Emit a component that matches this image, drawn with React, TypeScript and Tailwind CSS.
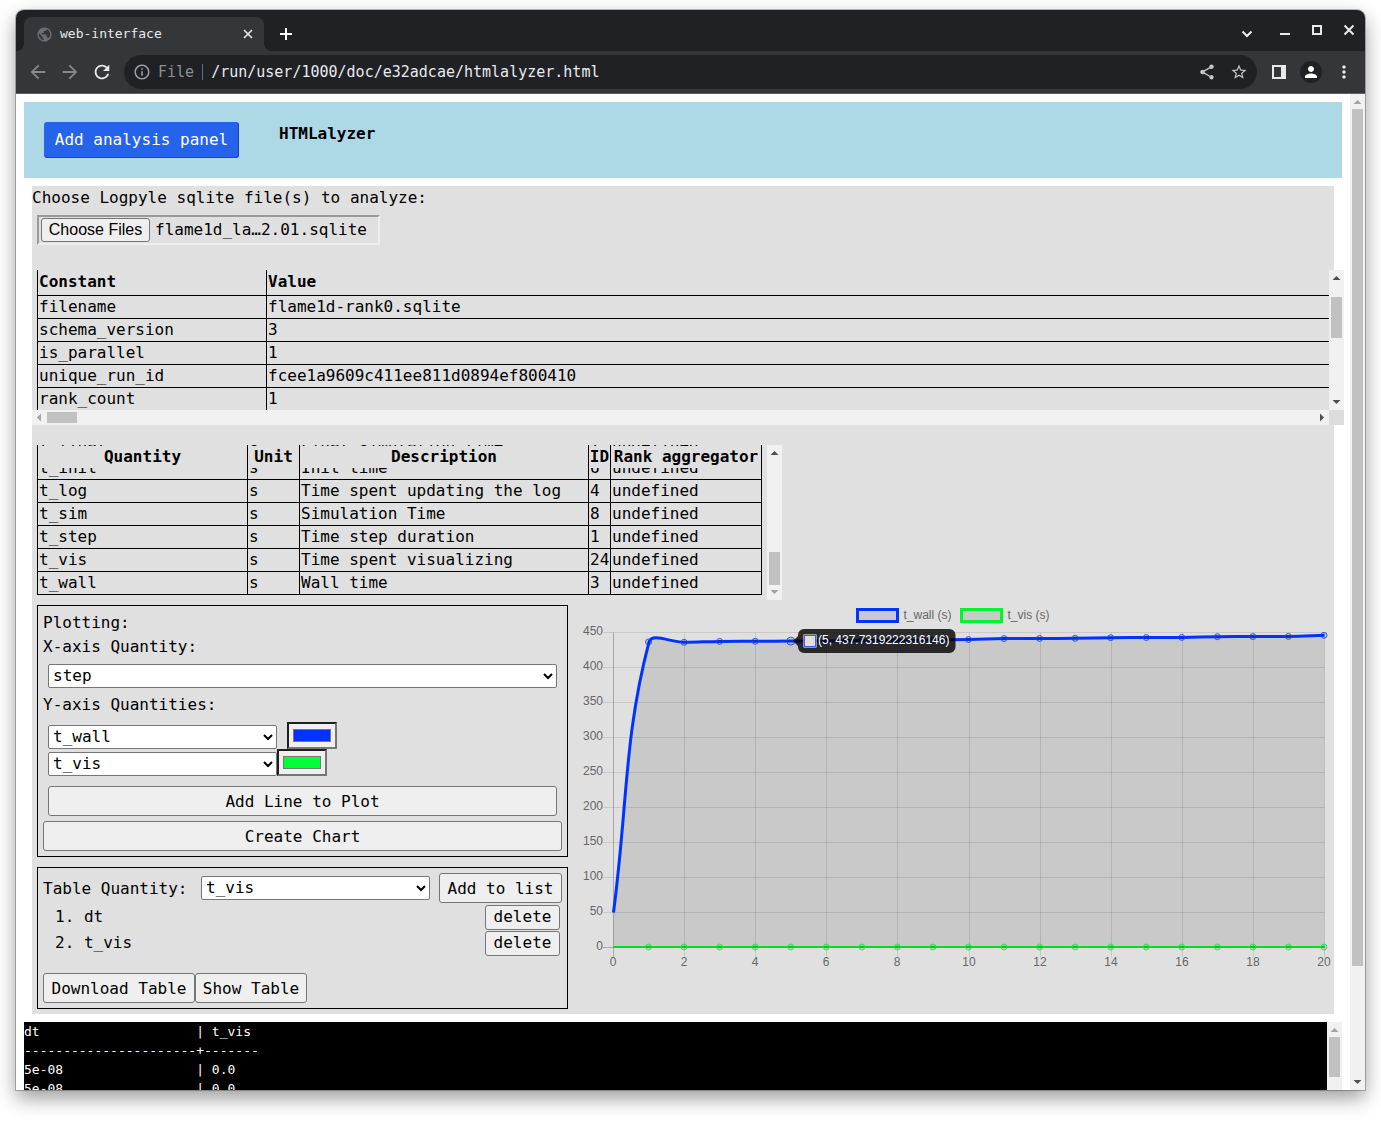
import { useLayoutEffect, useRef, type ReactNode } from "react";
import {
  MdArrowBack,
  MdArrowForward,
  MdInfoOutline,
  MdMoreVert,
  MdPerson,
  MdPublic,
  MdRefresh,
  MdShare,
  MdStarOutline,
} from "react-icons/md";

const constants = [
  ["filename", "flame1d-rank0.sqlite"],
  ["schema_version", "3"],
  ["is_parallel", "1"],
  ["unique_run_id", "fcee1a9609c411ee811d0894ef800410"],
  ["rank_count", "1"],
];

const quantities = [
  ["t_final", "s", "Final simulation time", "7", "undefined"],
  ["t_init", "s", "Init time", "6", "undefined"],
  ["t_log", "s", "Time spent updating the log", "4", "undefined"],
  ["t_sim", "s", "Simulation Time", "8", "undefined"],
  ["t_step", "s", "Time step duration", "1", "undefined"],
  ["t_vis", "s", "Time spent visualizing", "24", "undefined"],
  ["t_wall", "s", "Wall time", "3", "undefined"],
];

/* ---------- scroll bars ---------- */

function Arrow({ dir, dim }: { dir: "up" | "down" | "left" | "right"; dim?: boolean }) {
  const d = {
    up: "M3.500 10 7.500 6 11.500 10z",
    down: "M3.500 5 7.500 9 11.500 5z",
    left: "M9 3.500 5 7.500 9 11.500z",
    right: "M6 3.500 10 7.500 6 11.500z",
  }[dir];
  return (
    <svg className="size-[15px] shrink-0" viewBox="0 0 15 15" aria-hidden="true">
      <path d={d} fill={dim ? "#a3a3a3" : "#505050"} />
    </svg>
  );
}

function VBar({ thumb, upDim, downDim }: { thumb: string; upDim?: boolean; downDim?: boolean }) {
  return (
    <div className="flex w-[15px] shrink-0 flex-col bg-[#f1f1f1]">
      <Arrow dir="up" dim={upDim} />
      <div className="min-h-0 flex-1 px-[2px]">
        <div className={`bg-[#c1c1c1] ${thumb}`} />
      </div>
      <Arrow dir="down" dim={downDim} />
    </div>
  );
}

/* ---------- browser frame ---------- */

function TitleBar() {
  return (
    <div className="flex h-[41px] items-end bg-[#202124] pl-2 text-[#e8eaed]">
      <div className="relative flex h-[34px] w-60 items-center rounded-t-lg bg-[#35363a] pr-2 pl-3">
        <span className="absolute bottom-0 -left-2 size-2 bg-[radial-gradient(circle_at_0_0,#202124_8px,#35363a_8px)]" />
        <span className="absolute -right-2 bottom-0 size-2 bg-[radial-gradient(circle_at_100%_0,#202124_8px,#35363a_8px)]" />
        <MdPublic className="size-[17px] text-[#6b6e72]" />
        <span className="ml-[7px] flex-1 text-[13px]">web-interface</span>
        <button aria-label="Close tab" className="flex size-4 items-center justify-center">
          <svg className="size-3 shrink-0" viewBox="0 0 12 12" fill="none" stroke="currentColor" strokeWidth="1.600">
            <path d="m2 2 8 8M10 2l-8 8" />
          </svg>
        </button>
      </div>
      <button aria-label="New tab" className="ml-3 flex h-[34px] w-5 items-center justify-center text-white">
        <svg className="size-3 shrink-0" viewBox="0 0 12 12" fill="none" stroke="currentColor" strokeWidth="2">
          <path d="M6 0v12M0 6h12" />
        </svg>
      </button>
      <div className="ml-auto flex h-full items-center pb-px">
        <button aria-label="Search tabs" className="mr-[22px] flex size-4 items-center justify-center pt-2">
          <svg className="size-3 shrink-0" viewBox="0 0 12 12" fill="none" stroke="currentColor" strokeWidth="2">
            <path d="M1.500 3.500 6 8l4.500-4.500" />
          </svg>
        </button>
        <button aria-label="Minimize" className="mr-4 flex size-4 items-center justify-center">
          <svg className="size-3 shrink-0" viewBox="0 0 12 12" fill="currentColor">
            <path d="M1 9h10v2H1z" />
          </svg>
        </button>
        <button aria-label="Maximize" className="mr-4 flex size-4 items-center justify-center">
          <svg className="size-3 shrink-0" viewBox="0 0 12 12" fill="none" stroke="currentColor" strokeWidth="2">
            <path d="M2 2h8v8H2z" />
          </svg>
        </button>
        <button aria-label="Close" className="mr-2 flex size-4 items-center justify-center">
          <svg className="size-3 shrink-0" viewBox="0 0 12 12" fill="none" stroke="currentColor" strokeWidth="2">
            <path d="m1.500 1.500 9 9M10.500 1.500l-9 9" />
          </svg>
        </button>
      </div>
    </div>
  );
}

function Toolbar() {
  return (
    <div className="flex h-[43px] items-center border-b border-[#5f6064] bg-[#35363a] px-[11px] text-[#e8eaed]">
      <button aria-label="Back" className="mr-[10px] pb-px text-[#86888c]">
        <MdArrowBack className="size-[22px]" />
      </button>
      <button aria-label="Forward" className="mr-[10px] pb-px text-[#86888c]">
        <MdArrowForward className="size-[22px]" />
      </button>
      <button aria-label="Reload" className="mr-[11px] pb-px">
        <MdRefresh className="size-[22px]" />
      </button>
      <div className="flex h-[34px] flex-1 items-center rounded-full bg-[#202124] px-[9px] text-[15px]">
        <MdInfoOutline className="size-[18px] text-[#9aa0a6]" />
        <span className="ml-[7px] text-[#8b8f94]">File</span>
        <span className="mx-2 h-4 w-px bg-[#6b6e72]" />
        <input
          aria-label="Address"
          className="min-w-0 flex-1 bg-transparent"
          defaultValue="/run/user/1000/doc/e32adcae/htmlalyzer.html"
        />
        <button aria-label="Share" className="mr-[14px] text-[#c4c7c5]">
          <MdShare className="size-[18px]" />
        </button>
        <button aria-label="Bookmark" className="text-[#c4c7c5]">
          <MdStarOutline className="size-[18px]" />
        </button>
      </div>
      <button aria-label="Side panel" className="ml-[14px] pb-px">
        <svg className="size-4" viewBox="0 0 16 16" fill="currentColor">
          <path fillRule="evenodd" d="M1 1h14v14H1zM3 3v10h7V3z" />
        </svg>
      </button>
      <button
        aria-label="Profile"
        className="ml-[13px] flex size-[22px] items-center justify-center rounded-full bg-[#202124] text-white"
      >
        <MdPerson className="size-[18px]" />
      </button>
      <button aria-label="Menu" className="ml-3">
        <MdMoreVert className="size-5" />
      </button>
    </div>
  );
}

/* ---------- form parts ---------- */

function PushButton({ className, children }: { className: string; children: ReactNode }) {
  return (
    <button className={`rounded-[3px] border border-[#767676] bg-[#efefef] text-black ${className}`}>{children}</button>
  );
}

function Choice({ id, label, value, className }: { id: string; label?: string; value: string; className: string }) {
  return (
    <select
      id={id}
      aria-label={label}
      defaultValue={value}
      className={`h-6 rounded-[2px] border border-[#767676] bg-white pb-px text-black ${className}`}
    >
      {["step", "dt", "t_log", "t_sim", "t_step", "t_vis", "t_wall"].map((q) => (
        <option key={q}>{q}</option>
      ))}
    </select>
  );
}

function Swatch({ label, value }: { label: string; value: string }) {
  return (
    <input
      type="color"
      aria-label={label}
      defaultValue={value}
      className="h-[27px] w-[50px] border-2 border-t-[#1f1f1f] border-r-[#767676] border-b-[#767676] border-l-[#1f1f1f] bg-[#efefef] px-[2px] py-px"
    />
  );
}

/* ---------- tables ---------- */

function ConstantsTable() {
  return (
    <div className="mt-[25px] -mr-[10px]">
      <div className="flex h-[140px]">
        <div className="min-w-0 flex-1 overflow-hidden pl-[5px]">
          <table className="w-[150%] table-fixed border-collapse text-left leading-[22px]">
            <thead>
              <tr className="h-[25px]">
                <th className="w-[229px] border border-t-0 border-black px-px py-0">Constant</th>
                <th className="border border-t-0 border-black px-px py-0">Value</th>
              </tr>
            </thead>
            <tbody>
              {constants.map(([k, v]) => (
                <tr key={k}>
                  <td className="border border-black px-px py-0">{k}</td>
                  <td className="border border-black px-px py-0">{v}</td>
                </tr>
              ))}
            </tbody>
          </table>
        </div>
        <VBar thumb="mt-3 h-[41px]" />
      </div>
      <div className="flex h-[15px]">
        <div className="flex flex-1 items-center bg-[#f1f1f1]">
          <Arrow dir="left" dim />
          <div className="h-[11px] w-[30px] bg-[#c1c1c1]" />
          <div className="flex-1" />
          <Arrow dir="right" />
        </div>
        <div className="w-[15px] bg-[#dcdcdc]" />
      </div>
    </div>
  );
}

function QuantitiesTable() {
  const box = useRef<HTMLDivElement>(null);
  useLayoutEffect(() => {
    if (box.current) box.current.scrollTop = box.current.scrollHeight;
  }, []);
  return (
    <div className="mt-5 flex h-[155px] w-[750px] max-w-full">
      <div ref={box} className="min-w-0 flex-1 overflow-hidden px-[5px] pb-[5px]">
        <table className="w-full table-fixed border-collapse leading-[22px]">
          <colgroup>
            <col className="w-[210px]" />
            <col className="w-[52px]" />
            <col className="w-[289px]" />
            <col className="w-[22px]" />
            <col />
          </colgroup>
          <thead>
            <tr>
              {["Quantity", "Unit", "Description", "ID", "Rank aggregator"].map((h) => (
                <th key={h} className="sticky top-0 border border-black bg-[#e0e0e0] bg-clip-padding p-0 whitespace-nowrap">
                  {h}
                </th>
              ))}
            </tr>
          </thead>
          <tbody>
            {quantities.map((row) => (
              <tr key={row[0]}>
                {row.map((cell, i) => (
                  <td key={i} className="border border-black px-px py-0 whitespace-nowrap">
                    {cell}
                  </td>
                ))}
              </tr>
            ))}
          </tbody>
        </table>
      </div>
      <VBar thumb="mt-[92px] h-[33px]" downDim />
    </div>
  );
}

/* ---------- chart ---------- */

type Pt = { x: number; y: number };

const LEFT = 40.5;
const RIGHT = 751.5;
const TOP = 27.5;
const BOTTOM = 342.5;

const place = (i: number, v: number): Pt => ({
  x: LEFT + (i * (RIGHT - LEFT)) / 20,
  y: BOTTOM - (v * (BOTTOM - TOP)) / 450,
});

const wall = [
  50, 436.5, 436, 437.3, 437.5, 437.7, 438, 438.4, 438.8, 439.4, 440, 441.3, 441.5, 441.7, 442.6, 442.8, 443, 444, 444.2,
  444.4, 446,
].map((v, i) => place(i, v));
const vis = wall.map((_, i) => place(i, 0));

/* Cubic spline through the points, with control points kept inside the plot area. */
function spline(pts: Pt[], tension = 0.4) {
  const cap = (y: number) => Math.min(BOTTOM, Math.max(TOP, y));
  const ctl = pts.map((c, i) => {
    const p = pts[i - 1] ?? c;
    const n = pts[i + 1] ?? c;
    const a = Math.hypot(c.x - p.x, c.y - p.y);
    const b = Math.hypot(n.x - c.x, n.y - c.y);
    const fa = (tension * a) / (a + b);
    const fb = (tension * b) / (a + b);
    return {
      prev: { x: c.x - fa * (n.x - p.x), y: cap(c.y - fa * (n.y - p.y)) },
      next: { x: c.x + fb * (n.x - p.x), y: cap(c.y + fb * (n.y - p.y)) },
    };
  });
  return pts
    .map((p, i) =>
      i === 0
        ? `M${p.x} ${p.y}`
        : `C${ctl[i - 1].next.x} ${ctl[i - 1].next.y} ${ctl[i].prev.x} ${ctl[i].prev.y} ${p.x} ${p.y}`,
    )
    .join("");
}

function Chart() {
  const line = spline(wall);
  const xs = Array.from({ length: 11 }, (_, i) => i * 2);
  const ys = Array.from({ length: 10 }, (_, i) => i * 50);
  return (
    <svg
      className="h-auto w-full font-['Liberation_Sans',sans-serif] text-xs"
      viewBox="0 0 761 380"
      role="img"
      aria-label="t_wall and t_vis over step"
    >
      {xs.map((v) => {
        const x = Math.floor(place(v, 0).x) + 0.5;
        return (
          <g key={v}>
            <path d={`M${x} ${TOP}V${BOTTOM + 10}`} stroke="#000" strokeOpacity={v === 0 ? 0.25 : 0.1} />
            <text x={x - 0.5} y="361" textAnchor="middle" fill="#666">
              {v}
            </text>
          </g>
        );
      })}
      {ys.map((v) => {
        const y = place(0, v).y;
        return (
          <g key={v}>
            <path d={`M30 ${y}H${RIGHT}`} stroke="#000" strokeOpacity={v === 0 ? 0.25 : 0.1} />
            <text x="30" y={y + 2.5} textAnchor="end" fill="#666">
              {v}
            </text>
          </g>
        );
      })}
      <path d={`${line}V${BOTTOM}H${LEFT}z`} fill="#000" fillOpacity="0.1" />
      <path d={`M${LEFT} ${BOTTOM - 0.5}H${RIGHT}`} stroke="#00dc2c" strokeWidth="2" />
      <path d={line} fill="none" stroke="#0033ff" strokeWidth="3" />
      {vis.slice(1).map((p) => (
        <circle
          key={p.x}
          cx={p.x - 0.5}
          cy={p.y - 0.5}
          r="3"
          fill="#000"
          fillOpacity="0.1"
          stroke="#00f531"
          strokeOpacity="0.75"
        />
      ))}
      {wall.slice(1).map((p, i) => (
        <circle
          key={p.x}
          cx={p.x - 0.5}
          cy={p.y}
          r={i === 4 ? 4 : 3}
          fill="#000"
          fillOpacity="0.1"
          stroke="#1a45e6"
          strokeOpacity="0.85"
        />
      ))}

      <rect x="284.500" y="4.500" width="40" height="12" fill="#c9c9c9" stroke="#0033ff" strokeWidth="3" />
      <text x="330.500" y="14" fill="#666">
        t_wall (s)
      </text>
      <rect x="388.500" y="4.500" width="40" height="12" fill="#c9c9c9" stroke="#00f531" strokeWidth="3" />
      <text x="434.500" y="14" fill="#666">
        t_vis (s)
      </text>

      <g>
        <path
          d="M231 24h145.500a6 6 0 0 1 6 6v12a6 6 0 0 1-6 6H231a6 6 0 0 1-6-6v-1l-5-5 5-5v-1a6 6 0 0 1 6-6z"
          fill="#000"
          fillOpacity="0.8"
        />
        <rect x="231" y="30" width="12" height="12" fill="#e0e0e0" stroke="#fff" />
        <rect x="231.500" y="30.500" width="11" height="11" fill="#e0e0e0" stroke="#3d5fe8" />
        <text x="245" y="39" fill="#fff">
          (5, 437.7319222316146)
        </text>
      </g>
    </svg>
  );
}

/* ---------- page ---------- */

function Plotting() {
  return (
    <section className="border border-black p-[5px]">
      <h2>Plotting:</h2>
      <label htmlFor="x-axis" className="block">
        X-axis Quantity:
      </label>
      <div className="mt-[5px] flex px-[5px]">
        <Choice id="x-axis" value="step" className="w-full" />
      </div>
      <p className="my-[5px]">Y-axis Quantities:</p>
      <div className="flex h-[27px] items-end px-[5px]">
        <Choice id="y-axis-1" label="Y-axis quantity 1" value="t_wall" className="mr-[10px] w-[229px]" />
        <Swatch label="Line 1 colour" value="#0033ff" />
      </div>
      <div className="flex h-[27px] items-end px-[5px]">
        <Choice id="y-axis-2" label="Y-axis quantity 2" value="t_vis" className="w-[229px]" />
        <Swatch label="Line 2 colour" value="#00ff33" />
      </div>
      <div className="mt-[10px] px-[5px]">
        <PushButton className="h-[30px] w-full pt-px">Add Line to Plot</PushButton>
      </div>
      <PushButton className="mt-[5px] h-[30px] w-full pt-px">Create Chart</PushButton>
    </section>
  );
}

function TableBuilder() {
  return (
    <section className="border border-black p-[5px]">
      <div className="flex items-center">
        <label htmlFor="table-quantity" className="w-[158px] pt-px whitespace-nowrap">
          Table Quantity:
        </label>
        <Choice id="table-quantity" value="t_vis" className="w-[229px]" />
        <PushButton className="ml-auto h-[30px] w-[123px] pt-px">Add to list</PushButton>
      </div>
      <ol className="mt-px pr-[2px] pl-3">
        {["dt", "t_vis"].map((name, i) => (
          <li key={name} className="flex h-[26px] items-center justify-between">
            <span>
              {i + 1}. {name}
            </span>
            <PushButton className="h-[25px] w-[75px] leading-5">delete</PushButton>
          </li>
        ))}
      </ol>
      <div className="mt-[17px] flex">
        <PushButton className="h-[30px] w-[152px] pt-px">Download Table</PushButton>
        <PushButton className="h-[30px] w-28 pt-px">Show Table</PushButton>
      </div>
    </section>
  );
}

const terminal = `dt                    | t_vis
----------------------+-------
5e-08                 | 0.0
5e-08                 | 0.0
5e-08                 | 0.0`;

export default function App() {
  return (
    <div className="h-screen bg-white px-4 pt-[10px] pb-8 font-['DejaVu_Sans_Mono',monospace] text-base text-black">
      <div className="flex h-full flex-col overflow-hidden rounded-t-lg shadow-[0_0_0_1px_rgba(0,0,0,0.25),0_8px_20px_rgba(0,0,0,0.4)]">
        <TitleBar />
        <Toolbar />
        <div className="flex min-h-0 flex-1 bg-white">
          <main className="min-w-0 flex-1 overflow-hidden p-2">
            <header className="flex h-[76px] items-start bg-[#add8e6] px-5 pt-5">
              <button className="mr-10 h-9 w-[195px] rounded-[3px] border border-[#2563eb] border-r-[#1e40af] border-b-[#1e40af] bg-[#2563eb] whitespace-nowrap text-white">
                Add analysis panel
              </button>
              <h1 className="font-bold">HTMLalyzer</h1>
            </header>

            <div className="m-2 bg-[#e0e0e0] pb-[5px]">
              <label htmlFor="files" className="block">
                Choose Logpyle sqlite file(s) to analyze:
              </label>
              <div className="mt-[5px] ml-[5px] flex h-[30px] w-[343px] items-center border-2 border-t-[#9a9a9a] border-r-[#eee] border-b-[#eee] border-l-[#9a9a9a] pl-[2px]">
                <input id="files" type="file" multiple className="sr-only" />
                <PushButton className="mr-[5px] h-6 w-[109px] font-['Liberation_Sans',sans-serif] leading-5">
                  Choose Files
                </PushButton>
                <span className="whitespace-nowrap">flame1d_la…2.01.sqlite</span>
              </div>

              <ConstantsTable />
              <QuantitiesTable />

              <div className="mt-[5px] flex items-start gap-[5px] pl-[5px]">
                <div className="flex w-[531px] shrink-0 flex-col gap-[10px]">
                  <Plotting />
                  <TableBuilder />
                </div>
                <div className="min-w-0 flex-1">
                  <Chart />
                </div>
              </div>
            </div>

            <div className="flex h-40 bg-black">
              <pre className="flex-1 font-['DejaVu_Sans_Mono',monospace] text-[13px] leading-[19px] text-white">
                {terminal}
              </pre>
              <VBar thumb="h-10" upDim />
            </div>
          </main>
          <VBar thumb="h-[857px]" upDim />
        </div>
      </div>
    </div>
  );
}
